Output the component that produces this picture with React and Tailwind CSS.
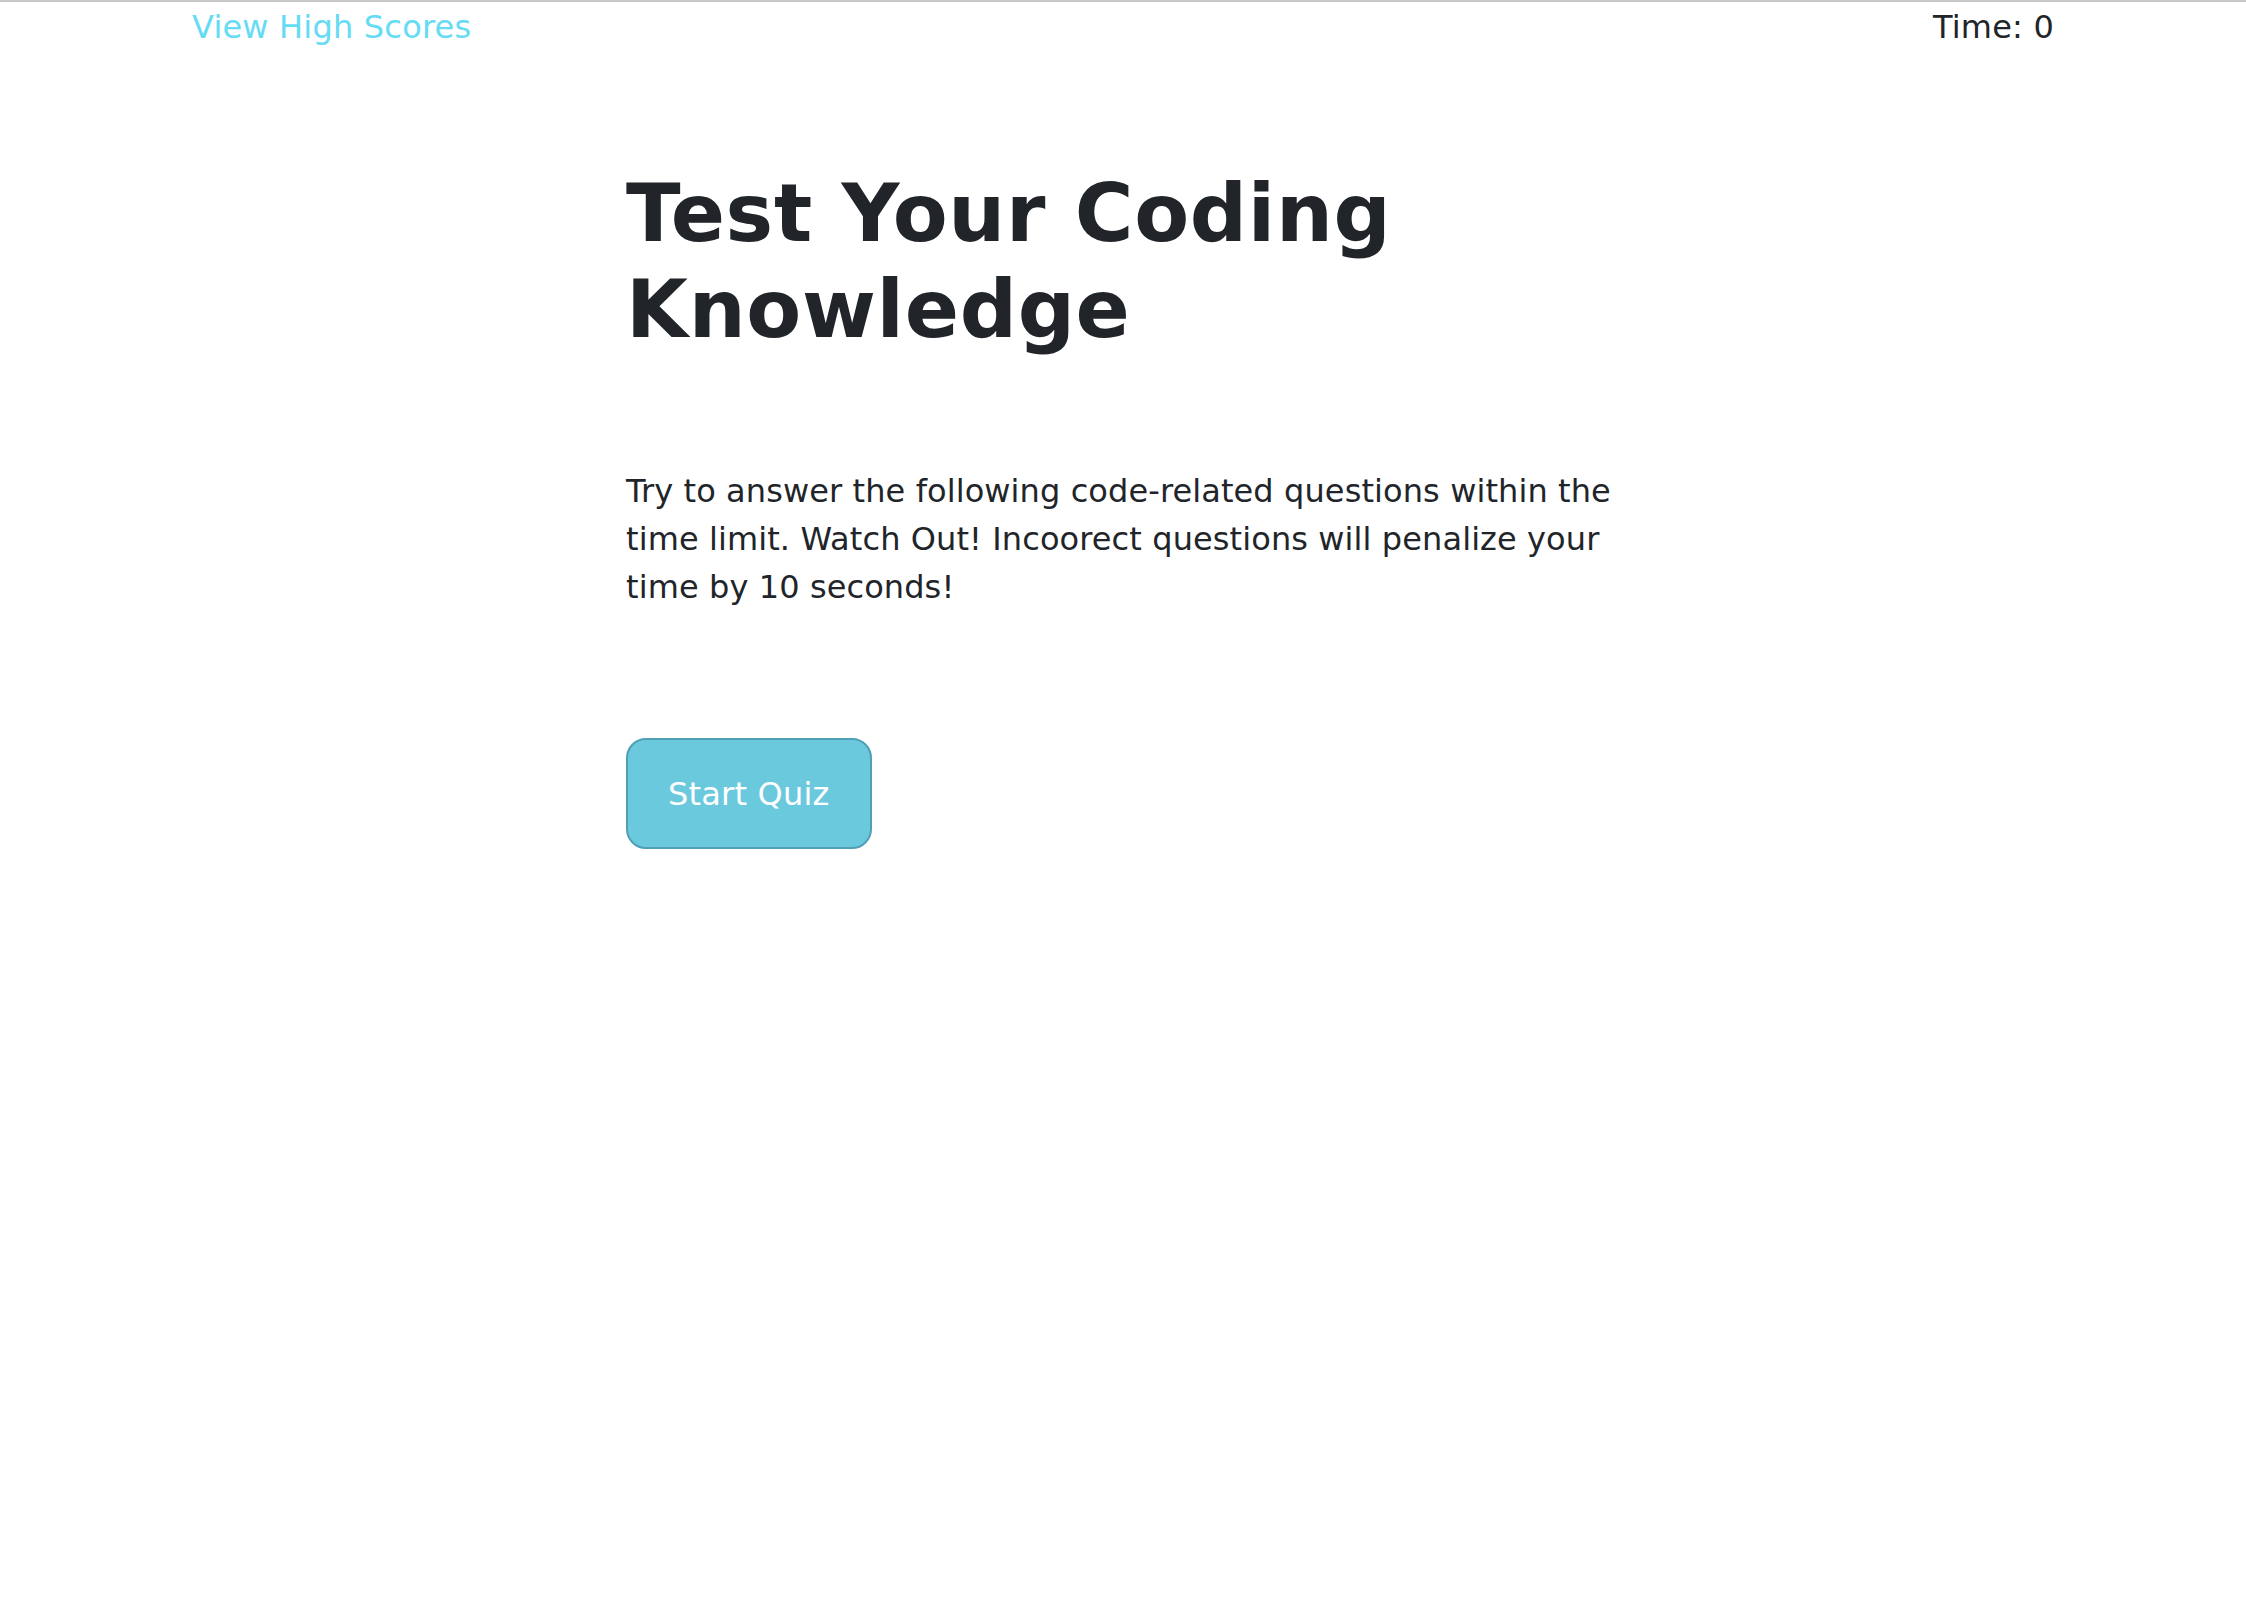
const QUIZ_INTRO =
  'Try to answer the following code-related questions within the time limit. Watch Out! Incoorect questions will penalize your time by 10 seconds!'

const Header = ({ time = 0 }) => (
  <header className="flex items-start justify-between px-[192px] pt-px text-[32px] leading-[48px] tracking-[0.2px]">
    <a href="#" className="text-[#66dbf4]">
      View High Scores
    </a>
    <span className="text-[#212529]">Time: {time}</span>
  </header>
)

export default function App() {
  return (
    <div
      className="min-h-screen border-t-2 border-[#c8c8c8] bg-white text-[#212529]"
      style={{ fontFamily: '"DejaVu Sans", Verdana, sans-serif' }}
    >
      <Header time={0} />
      <main className="mx-auto w-[994px] pt-[115px]">
        <h1 className="text-[80px] font-bold leading-[96px] tracking-[0.7px]">Test Your Coding Knowledge</h1>
        <p className="mt-[109px] text-[32px] leading-[48px] tracking-[0.1px]">{QUIZ_INTRO}</p>
        <button
          type="button"
          className="mt-[127px] rounded-[20px] border-2 border-[#509fb6] bg-[#6bc9de] px-[40px] pt-[30px] pb-[29px] text-[32px] leading-[48px] tracking-[0.2px] text-white"
        >
          Start Quiz
        </button>
      </main>
    </div>
  )
}
